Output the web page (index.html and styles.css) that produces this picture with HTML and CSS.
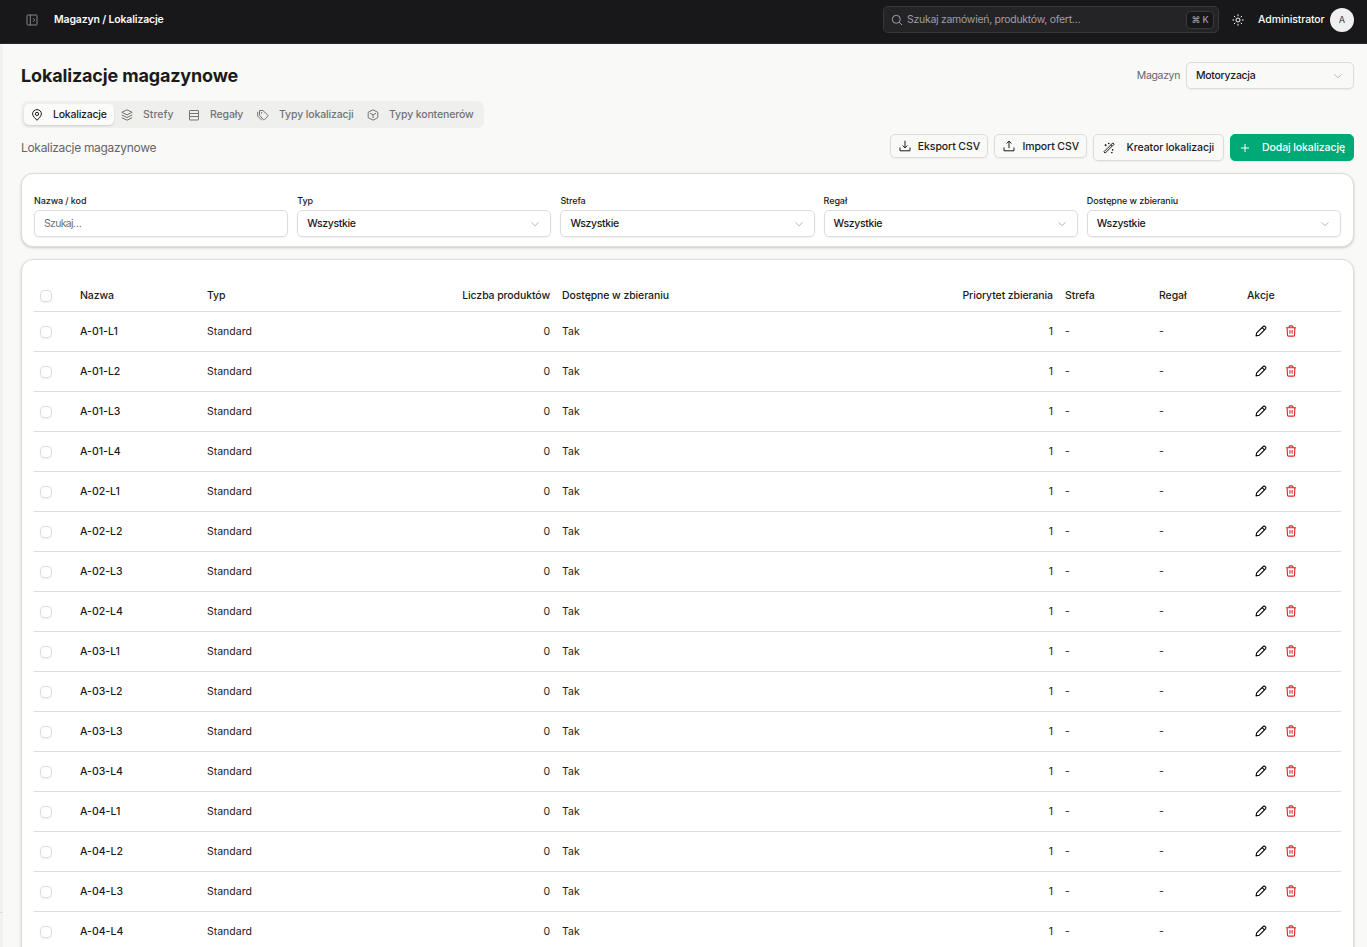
FILE: index.html
```html
<!DOCTYPE html>
<html lang="pl">
<head>
<meta charset="utf-8">
<title>Lokalizacje magazynowe</title>
<link rel="stylesheet" href="styles.css">
</head>
<body>
<svg class="sprite" aria-hidden="true">
  <symbol id="panel" viewBox="0 0 12 12"><rect x="1" y="1" width="10" height="10" rx=".8"/><path d="M4.3 1v10M7 4.2 8.8 6 7 7.8"/></symbol>
  <symbol id="search" viewBox="0 0 12 12"><circle cx="5.3" cy="5.3" r="4"/><path d="m8.2 8.2 2.8 2.8"/></symbol>
  <symbol id="sun" viewBox="0 0 12 12"><circle cx="6" cy="6" r="2"/><path d="M6 .4v1.8M6 9.800v1.800M.4 6h1.800M9.800 6h1.800M2 2l1.300 1.300M8.700 8.700 10 10M2 10l1.300-1.300M8.700 3.300 10 2"/></symbol>
  <symbol id="pin" viewBox="0 0 12 12"><path d="M6 11.300C4.600 9.600 1.600 7.300 1.600 4.900a4.400 4.300 0 0 1 8.800 0C10.400 7.300 7.400 9.600 6 11.300Z"/><circle cx="6" cy="4.900" r="1.600"/></symbol>
  <symbol id="layers" viewBox="0 0 12 12"><path d="M6 .8 11.200 3.300 6 5.800.8 3.300ZM.8 6 6 8.500 11.200 6M.8 8.700 6 11.200l5.200-2.500"/></symbol>
  <symbol id="rack" viewBox="0 0 12 12"><rect x="1.500" y="1.500" width="9" height="9.500" rx=".5"/><path d="M1.500 4.500h9M1.500 7.500h9"/></symbol>
  <symbol id="tags" viewBox="0 0 12 12"><path d="M2.500 1.500h3.300l5 4.500a.8.8 0 0 1 0 1.200l-3.200 3.400a.8.8 0 0 1-1.200 0L2.500 6.200ZM.7 2.800v4.300l4.200 4.200"/><circle cx="4.700" cy="3.900" r=".4"/></symbol>
  <symbol id="box" viewBox="0 0 12 12"><path d="M6 .8 10.800 3.300v5.400L6 11.200 1.200 8.700V3.300ZM3 4.200l3 1.700 3-1.700M6 5.900v3.300"/></symbol>
  <symbol id="down" viewBox="0 0 12 12"><path d="M1 7.500v3.300h10V7.500M6 .8v7M3.600 5.500 6 7.900l2.400-2.400"/></symbol>
  <symbol id="up" viewBox="0 0 12 12"><path d="M1 7.500v3.300h10V7.500M6 8.200V1.100M3.600 3.500 6 1.100l2.400 2.400"/></symbol>
  <symbol id="wand" viewBox="0 0 12 12"><path d="m.9 9.800 8.900-8.900 1.300 1.300-8.900 8.900ZM7.700 3l1.300 1.300M2.600 2.200v2M1.600 3.200h2M5.700.8v1.400M5 1.500h1.400M9.600 7.200v1.400M8.900 7.900h1.400M8.800 10v1.200M8.200 10.600h1.200"/></symbol>
  <symbol id="plus" viewBox="0 0 12 12"><path d="M6 2v8M2 6h8"/></symbol>
  <symbol id="chev" viewBox="0 0 12 12"><path d="M2.600 4.400 6 7.800l3.400-3.400"/></symbol>
  <symbol id="pencil" viewBox="0 0 12 12"><path d="m1 11 .7-3.100 6.500-6.400a1.300 1.300 0 0 1 1.900 0l.4.400a1.300 1.300 0 0 1 0 1.900L4.100 10.300ZM7.200 2.600l2.200 2.200"/></symbol>
  <symbol id="trash" viewBox="0 0 12 12"><path d="M1 2.700h10M4 2.500l.5-1.600h3L8 2.500M2.100 2.700l.4 7.500a1 1 0 0 0 1 .9h5a1 1 0 0 0 1-.9l.4-7.500M4.900 5v3.800M7.100 5v3.800"/></symbol>
</svg>
<div class="app">
  <header class="topbar">
    <svg class="ico topbar-toggle"><use href="#panel"/></svg>
    <span class="crumbs">Magazyn / Lokalizacje</span>
    <div class="search"><svg class="ico"><use href="#search"/></svg><span class="search-hint">Szukaj zamówień, produktów, ofert…</span><kbd>⌘ K</kbd></div>
    <svg class="ico sun"><use href="#sun"/></svg>
    <span class="user">Administrator</span>
    <span class="avatar">A</span>
  </header>
  <div class="shell">
    <aside class="rail"></aside>
    <main class="main">
      <div class="title-row">
        <h1>Lokalizacje magazynowe</h1>
        <span class="wh-label">Magazyn</span>
        <div class="field wh"><span>Motoryzacja</span><svg class="ico"><use href="#chev"/></svg></div>
      </div>
      <nav class="tabs">
        <a class="tab active"><svg class="ico"><use href="#pin"/></svg><span>Lokalizacje</span></a>
        <a class="tab zones"><svg class="ico"><use href="#layers"/></svg><span>Strefy</span></a>
        <a class="tab racks"><svg class="ico"><use href="#rack"/></svg><span>Regały</span></a>
        <a class="tab types"><svg class="ico"><use href="#tags"/></svg><span>Typy lokalizacji</span></a>
        <a class="tab"><svg class="ico"><use href="#box"/></svg><span>Typy kontenerów</span></a>
      </nav>
      <div class="actions">
        <p>Lokalizacje magazynowe</p>
        <a class="btn small export"><svg class="ico"><use href="#down"/></svg><span>Eksport CSV</span></a>
        <a class="btn small import"><svg class="ico"><use href="#up"/></svg><span>Import CSV</span></a>
        <a class="btn creator"><svg class="ico"><use href="#wand"/></svg><span>Kreator lokalizacji</span></a>
        <a class="btn primary"><svg class="ico"><use href="#plus"/></svg><span>Dodaj lokalizację</span></a>
      </div>
      <section class="card filters">
        <div class="filter"><label>Nazwa / kod</label><div class="field muted"><span>Szukaj…</span></div></div>
        <div class="filter"><label>Typ</label><div class="field"><span>Wszystkie</span><svg class="ico"><use href="#chev"/></svg></div></div>
        <div class="filter"><label>Strefa</label><div class="field"><span>Wszystkie</span><svg class="ico"><use href="#chev"/></svg></div></div>
        <div class="filter"><label>Regał</label><div class="field"><span>Wszystkie</span><svg class="ico"><use href="#chev"/></svg></div></div>
        <div class="filter"><label>Dostępne w zbieraniu</label><div class="field"><span>Wszystkie</span><svg class="ico"><use href="#chev"/></svg></div></div>
      </section>
      <section class="card list">
        <table>
          <colgroup><col class="c-check"><col class="c-name"><col class="c-type"><col class="c-count"><col class="c-avail"><col class="c-prio"><col class="c-zone"><col class="c-rack"><col class="c-act"></colgroup>
          <thead><tr><th><i class="check"></i></th><th>Nazwa</th><th>Typ</th><th class="num">Liczba produktów</th><th>Dostępne w zbieraniu</th><th class="num">Priorytet zbierania</th><th>Strefa</th><th>Regał</th><th>Akcje</th></tr></thead>
          <tbody id="rows"></tbody>
        </table>
      </section>
    </main>
  </div>
</div>
<script src="rows.js"></script>
</body>
</html>
```
FILE: rows.js
```javascript
const rows = [];
for (let rack = 1; rack <= 4; rack++) {
  for (let level = 1; level <= 4; level++) {
    rows.push(`<tr><td><i class="check"></i></td><td class="name">A-0${rack}-L${level}</td><td>Standard</td><td class="num">0</td><td>Tak</td><td class="num">1</td><td>-</td><td>-</td><td><div class="row-actions"><svg class="ico"><use href="#pencil"/></svg><svg class="ico danger"><use href="#trash"/></svg></div></td></tr>`);
  }
}
document.getElementById('rows').innerHTML = rows.join('');
```
FILE: styles.css
```css
* { box-sizing: border-box; }
body { margin: 0; background: #f9f9f7; color: #1b1b1b; font: 500 10.5px/16px Inter, "Noto Sans", sans-serif; letter-spacing: -.1px; }
.sprite { position: absolute; width: 0; height: 0; }
.ico { width: 12px; height: 12px; flex: none; display: block; fill: none; stroke: currentColor; stroke-width: 1; stroke-linejoin: round; }
.app { height: 947px; overflow: hidden; display: flex; flex-direction: column; }
.topbar { height: 44px; flex: none; display: flex; align-items: center; padding: 0 13px 4px 26px; background: #18181b; border-bottom: 1px solid #27272a; color: #fafafa; }
.topbar-toggle { color: #85858c; }
.crumbs { margin-left: 16px; font-weight: 600; letter-spacing: -.16px; }
.search { margin-left: auto; width: 336px; height: 27px; display: flex; align-items: center; gap: 4px; padding: 0 4px 0 7px; border: 1px solid #37373b; border-radius: 5px; background: #242427; color: #9f9fa9; }
.search-hint { font-weight: 400; flex: 1; letter-spacing: -.28px; }
kbd { width: 28px; height: 18px; display: grid; place-items: center; border: 1px solid #3a3a3e; border-radius: 4px; background: #18181b; font: 500 9px Inter, "DejaVu Sans", sans-serif; }
.sun { margin-left: 13px; }
.user { margin-left: 14px; width: 66px; letter-spacing: -.1px; white-space: nowrap; }
.avatar { margin-left: 6px; width: 24px; height: 24px; border-radius: 50%; background: #f0f0f0; color: #555; display: grid; place-items: center; font-size: 9px; }
.shell { flex: 1; min-height: 0; display: flex; }
.rail { width: 3px; background: linear-gradient(#ddd, #ddd) 0 868px / 3px 1px no-repeat #f2f2f0; }
.main { flex: 1; min-width: 0; padding: 18px 13px 0 18px; }
.title-row { display: flex; align-items: center; height: 27px; }
h1 { margin: 0 auto 0 0; font-size: 18px; line-height: 27px; font-weight: 700; letter-spacing: -.16px; }
.wh-label { color: #666; margin-right: 6px; font-weight: 400; letter-spacing: -.35px; }
.field { height: 27px; display: flex; align-items: center; justify-content: space-between; padding: 0 9px; border: 1px solid #dcdcdc; border-radius: 5px; box-shadow: 0 1px 2px rgba(0,0,0,.06); letter-spacing: -.36px; }
.field .ico { color: #b5b5b5; }
.field.muted { color: #707070; font-weight: 400; letter-spacing: -.7px; }
.wh { width: 168px; letter-spacing: -.28px; }
.tabs { margin-top: 12px; width: 463px; height: 27px; padding: 3px; display: flex; align-items: center; border-radius: 7px; background: #efefee; color: #737373; letter-spacing: -.13px; }
.tab { height: 21px; display: flex; align-items: center; gap: 10px; padding: 0 7px; border-radius: 5px; white-space: nowrap; }
.tab.active { width: 90px; background: #fbfbfa; color: #1b1b1b; box-shadow: 0 1px 2px rgba(0,0,0,.14); letter-spacing: -.22px; }
.zones { width: 67px; letter-spacing: .05px; }
.racks { width: 69px; }
.types { width: 110px; }
.actions { margin-top: 6px; height: 27px; display: flex; align-items: flex-start; gap: 6px; }
.actions p { margin: 0 auto 0 0; line-height: 27px; font-size: 12px; font-weight: 400; color: #666; letter-spacing: -.31px; }
.btn { height: 27px; display: flex; align-items: center; justify-content: space-between; padding: 0 9px; border: 1px solid #dcdcdc; border-radius: 5px; box-shadow: 0 1px 2px rgba(0,0,0,.06); white-space: nowrap; }
.small { height: 24px; padding: 0 7px 0 8px; }
.small span { padding-top: 2px; }
.export { width: 98px; }
.import { width: 93px; }
.creator { width: 131px; }
.primary { width: 124px; padding: 0 8px; border-color: #00aa76; background: #00aa76; color: #fff; }
.card { background: #fff; border: 1px solid #ddd; border-radius: 12px; box-shadow: 0 1px 3px rgba(0,0,0,.12), 0 1px 2px rgba(0,0,0,.08); }
.filters { margin-top: 12px; height: 74px; padding: 20px 12px 0; display: grid; grid-template-columns: repeat(5, 1fr); gap: 9px; }
.filter label { display: block; height: 16px; line-height: 14px; font-size: 9px; }
.list { margin-top: 12px; padding: 20px 12px 0; height: 720px; }
table { width: 100%; table-layout: fixed; border-collapse: collapse; }
.c-check { width: 40px; } .c-name { width: 127px; } .c-type { width: 155px; } .c-count { width: 200px; } .c-avail { width: 303px; } .c-prio { width: 200px; } .c-zone { width: 94px; } .c-rack { width: 88px; } .c-act { width: 100px; }
th, td { padding: 2px 6px 0; text-align: left; white-space: nowrap; border-bottom: 1px solid #dedede; }
th { height: 31px; font-weight: 500; }
td { height: 40px; font-weight: 400; letter-spacing: 0; }
td.name { font-weight: 500; }
.num { text-align: right; }
.check { display: block; width: 12px; height: 12px; margin-top: -1px; border: 1px solid #dcdcdc; border-radius: 4px; box-shadow: 0 1px 2px rgba(0,0,0,.06); }
.row-actions { display: flex; gap: 18px; padding-left: 8px; margin-bottom: 2px; color: #000; }
.row-actions .ico { stroke-width: 1.1; }
.row-actions .danger { color: #e02424; }
```
